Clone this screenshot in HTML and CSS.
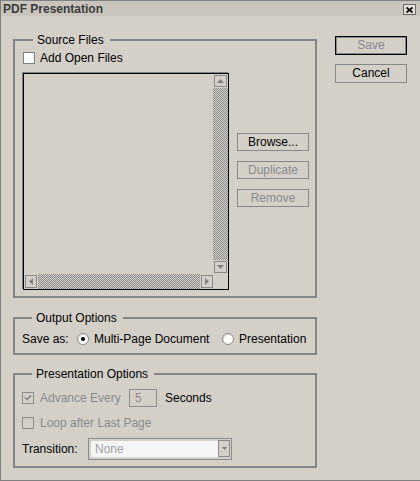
FILE: index.html
```html
<!DOCTYPE html>
<html>
<head>
<meta charset="utf-8">
<title>PDF Presentation</title>
<link rel="stylesheet" href="styles.css">
</head>
<body>
<div class="window">
  <div class="titlebar">
    <span class="title">PDF Presentation</span>
    <span class="close"><svg width="7" height="6" viewBox="0 0 7 6"><path d="M0.5 0.5L6.5 5.5M6.5 0.5L0.5 5.5" stroke="#000" stroke-width="1.7" fill="none"/></svg></span>
  </div>
  <div class="body">
    <div class="main">
      <div class="group group-source">
        <div class="legend">Source Files</div>
        <div class="check-row">
          <span class="checkbox"></span><span>Add Open Files</span>
        </div>
        <div class="list-row">
          <div class="listbox">
            <div class="list-area"></div>
            <div class="vscroll">
              <span class="sbtn sbtn-v"><svg width="7" height="4" viewBox="0 0 7 4"><polygon points="3.5,0 7,4 0,4" fill="#808080"/></svg></span>
              <span class="track"></span>
              <span class="sbtn sbtn-v"><svg width="7" height="4" viewBox="0 0 7 4"><polygon points="0,0 7,0 3.5,4" fill="#808080"/></svg></span>
            </div>
            <div class="hscroll">
              <span class="sbtn sbtn-h"><svg width="4" height="7" viewBox="0 0 4 7"><polygon points="0,3.5 4,0 4,7" fill="#808080"/></svg></span>
              <span class="track"></span>
              <span class="sbtn sbtn-h"><svg width="4" height="7" viewBox="0 0 4 7"><polygon points="0,0 4,3.5 0,7" fill="#808080"/></svg></span>
            </div>
            <div class="corner"></div>
          </div>
          <div class="side-buttons">
            <div class="btn">Browse...</div>
            <div class="btn disabled">Duplicate</div>
            <div class="btn disabled">Remove</div>
          </div>
        </div>
      </div>

      <div class="group group-output">
        <div class="legend">Output Options</div>
        <div class="opt-row">
          <span class="label-saveas">Save as:</span>
          <span class="radio-opt first"><span class="radio checked"></span><span>Multi-Page Document</span></span>
          <span class="radio-opt"><span class="radio"></span><span>Presentation</span></span>
        </div>
      </div>

      <div class="group group-pres">
        <div class="legend">Presentation Options</div>
        <div class="pres-row1">
          <span class="checkbox disabled-box"><svg width="10" height="10" viewBox="0 0 10 10"><polyline points="2,4.5 4,6.5 8,2.5" stroke="#808080" stroke-width="1.5" fill="none"/></svg></span>
          <span class="muted adv-label">Advance Every</span>
          <span class="num-input">5</span>
          <span class="seconds">Seconds</span>
        </div>
        <div class="pres-row2">
          <span class="checkbox disabled-box"></span>
          <span class="muted">Loop after Last Page</span>
        </div>
        <div class="pres-row3">
          <span class="trans-label">Transition:</span>
          <div class="select">
            <span class="select-field">None</span>
            <span class="select-btn"><svg width="5" height="3" viewBox="0 0 5 3"><polygon points="0,0 5,0 2.5,3" fill="#808080"/></svg></span>
          </div>
        </div>
      </div>
    </div>

    <div class="actions">
      <div class="btn btn-default disabled">Save</div>
      <div class="btn btn-cancel">Cancel</div>
    </div>
  </div>
</div>
</body>
</html>
```

FILE: styles.css
```css
html, body {
  margin: 0;
  padding: 0;
  background: #d4d0c8;
}

body {
  font-family: "Liberation Sans", Arial, sans-serif;
  font-size: 12px;
  color: #000;
}

.window {
  width: 420px;
  height: 481px;
  box-sizing: border-box;
  border: 1px solid #808080;
  border-right: 0;
  background: #d4d0c8;
}

.titlebar {
  height: 15px;
  background: #c9c5bc;
  display: flex;
  align-items: center;
  justify-content: space-between;
  padding: 0 4px 0 2px;
}

.title {
  font-weight: bold;
  color: #3c3c3c;
  line-height: 15px;
  position: relative;
  top: 1px;
}

.close {
  width: 13px;
  height: 11px;
  box-sizing: border-box;
  border: 1px solid #6a6a6a;
  background: #e4e1da;
  display: flex;
  align-items: center;
  justify-content: center;
  margin-top: 2px;
}

.close svg { display: block; }

.body {
  display: flex;
  padding-left: 12px;
}

.main {
  width: 304px;
  padding-top: 23px;
}

.actions {
  margin-left: 18px;
  padding-top: 20px;
  display: flex;
  flex-direction: column;
  gap: 9px;
}

.group {
  border: 2px solid #858585;
}

.legend {
  display: table;
  margin: -8px 0 0 10px;
  padding: 0 6px 0 4px;
  background: #d4d0c8;
  line-height: 14px;
}

.group-source {
  padding: 0 0 6px 8px;
}

.check-row {
  display: flex;
  align-items: center;
  margin-top: 4px;
  height: 14px;
  line-height: 14px;
}

.checkbox {
  width: 12px;
  height: 12px;
  box-sizing: border-box;
  border: 1px solid #808080;
  background: #fff;
  margin-right: 5px;
  flex: none;
  display: flex;
  align-items: center;
  justify-content: center;
}

.checkbox svg { display: block; }

.disabled-box {
  background: #d4d0c8;
  border-color: #8c8c8c;
  margin-right: 6px;
}

.list-row {
  display: flex;
  margin-top: 8px;
}

.listbox {
  width: 206px;
  height: 217px;
  box-sizing: border-box;
  border: 1px solid #000;
  box-shadow: -1px -1px 0 #808080;
  display: grid;
  grid-template-columns: 1fr 15px;
  grid-template-rows: 1fr 15px;
}

.list-area {
  background: #d4d0c8;
}

.vscroll {
  display: flex;
  flex-direction: column;
}

.hscroll {
  display: flex;
}

.track {
  flex: 1;
  background: repeating-conic-gradient(#8a8a8a 0 25%, #d4d0c8 0 50%) 0 0 / 2px 2px;
}

.sbtn {
  box-sizing: border-box;
  border: 1px solid #8a8a8a;
  background: #d4d0c8;
  display: flex;
  align-items: center;
  justify-content: center;
  flex: none;
}

.sbtn svg { display: block; }

.sbtn-v {
  width: 13px;
  height: 12px;
  margin: 1px;
}

.sbtn-h {
  width: 12px;
  height: 13px;
  margin: 1px;
}

.hscroll .sbtn-h:last-child {
  margin-right: 0;
}

.corner {
  background: #d4d0c8;
}

.side-buttons {
  margin-left: 8px;
  padding-top: 60px;
  display: flex;
  flex-direction: column;
  gap: 10px;
}

.btn {
  width: 72px;
  height: 18px;
  box-sizing: border-box;
  border: 1px solid #878787;
  text-align: center;
  line-height: 16px;
  color: #000;
}

.btn.disabled {
  color: #8a8a8a;
}

.btn-default {
  height: 19px;
  border: 1px solid #000;
  box-shadow: inset 0 0 0 1px #878787;
  line-height: 17px;
}

.btn-cancel {
  height: 19px;
  line-height: 17px;
}

.group-output {
  margin-top: 19px;
  padding: 0 0 7px 7px;
}

.opt-row {
  margin-top: 7px;
  display: flex;
  align-items: center;
  height: 14px;
  line-height: 14px;
}

.label-saveas {
  width: 55px;
  flex: none;
}

.radio-opt {
  display: flex;
  align-items: center;
}

.radio-opt.first {
  width: 145px;
  flex: none;
}

.radio {
  width: 12px;
  height: 12px;
  box-sizing: border-box;
  border-radius: 50%;
  border: 1px solid #8a8a8a;
  background: #fff;
  box-shadow: inset 1px 1px 0 #e6e3dd;
  margin-right: 5px;
  flex: none;
  display: flex;
  align-items: center;
  justify-content: center;
}

.radio.checked::after {
  content: "";
  width: 4px;
  height: 4px;
  border-radius: 50%;
  background: #000;
}

.group-pres {
  margin-top: 18px;
  padding: 0 0 6px 7px;
}

.muted {
  color: #8a8a8a;
}

.pres-row1 {
  margin-top: 8px;
  display: flex;
  align-items: center;
  height: 18px;
  line-height: 14px;
}

.adv-label {
  width: 89px;
  flex: none;
}

.num-input {
  width: 28px;
  height: 18px;
  box-sizing: border-box;
  border: 1px solid #8c8c8c;
  color: #8a8a8a;
  line-height: 16px;
  padding-left: 5px;
  flex: none;
}

.seconds {
  margin-left: 8px;
}

.pres-row2 {
  margin-top: 9px;
  display: flex;
  align-items: center;
  height: 14px;
  line-height: 14px;
}

.pres-row3 {
  margin-top: 8px;
  display: flex;
  align-items: center;
  height: 22px;
}

.trans-label {
  width: 66px;
  flex: none;
}

.select {
  width: 144px;
  height: 22px;
  box-sizing: border-box;
  border: 1px solid #8c8c8c;
  padding: 2px 1px 2px 2px;
  display: flex;
}

.select-field {
  flex: 1;
  background: #f6f6f6;
  color: #a0a0a0;
  line-height: 16px;
  padding-left: 4px;
}

.select-btn {
  width: 12px;
  box-sizing: border-box;
  border: 1px solid #8c8c8c;
  margin-top: -1px;
  display: flex;
  align-items: center;
  justify-content: center;
}

.select-btn svg { display: block; }
```
